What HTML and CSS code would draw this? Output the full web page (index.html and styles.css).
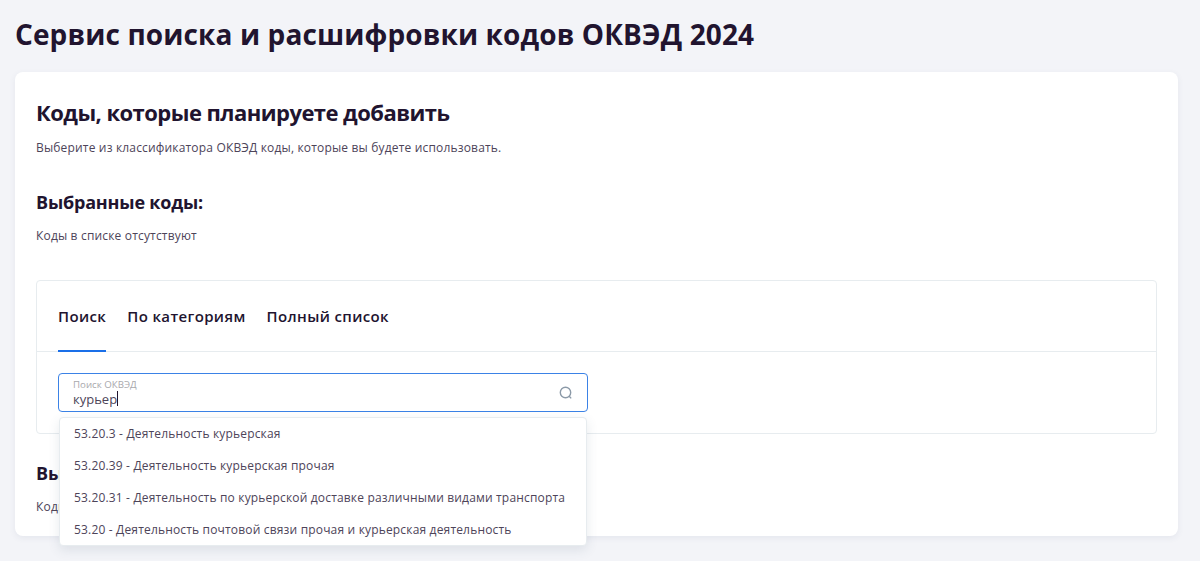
FILE: index.html
```html
<!DOCTYPE html>
<html lang="ru">
  <head>
    <meta charset="UTF-8" />
    <meta name="viewport" content="width=device-width, initial-scale=1.0" />
    <title>Сервис поиска и расшифровки кодов ОКВЭД 2024</title>
    <link rel="stylesheet" href="styles.css">
  </head>
  <body>
    <h1 class="page-title">Сервис поиска и расшифровки кодов ОКВЭД 2024</h1>

    <div class="card">
      <h2 class="card-title">Коды, которые планируете добавить</h2>
      <p class="hint hint-first">Выберите из классификатора ОКВЭД коды, которые вы будете использовать.</p>

      <h3 class="section-title section-selected">Выбранные коды:</h3>
      <p class="hint">Коды в списке отсутствуют</p>

      <div class="picker">
        <div class="tabs">
          <div class="tab active">Поиск</div>
          <div class="tab">По категориям</div>
          <div class="tab">Полный список</div>
        </div>

        <div class="picker-body">
          <div class="search-field">
            <div class="search-text">
              <span class="search-label">Поиск ОКВЭД</span>
              <span class="search-value">курьер<span class="caret"></span></span>
            </div>
            <svg class="search-icon" width="16" height="16" viewBox="0 0 16 16" fill="none">
              <circle cx="7.5" cy="7.5" r="5.2" stroke="#8c9aa8" stroke-width="1.4" />
              <path d="M11.2 11.2L13.2 13.4" stroke="#8c9aa8" stroke-width="1.4" />
            </svg>
          </div>

          <ul class="suggestions">
            <li>53.20.3 - Деятельность курьерская</li>
            <li>53.20.39 - Деятельность курьерская прочая</li>
            <li>53.20.31 - Деятельность по курьерской доставке различными видами транспорта</li>
            <li>53.20 - Деятельность почтовой связи прочая и курьерская деятельность</li>
          </ul>
        </div>
      </div>

      <h3 class="section-title section-excluded">Выбранные коды:</h3>
      <p class="hint">Коды в списке отсутствуют</p>
    </div>
  </body>
</html>
```

FILE: styles.css
```css
html,
body {
  height: 100%;
  overflow: hidden;
}

body {
  margin: 0;
  padding: 15px 22px 0 15px;
  box-sizing: border-box;
  background: #f3f4f8;
  font-family: 'Open Sans', 'Noto Sans', sans-serif;
  color: #21142f;
}

.page-title {
  margin: 0 0 18px 0;
  font-size: 28px;
  line-height: 39px;
  font-weight: 700;
  letter-spacing: 0.12px;
}

.card {
  height: 464px;
  box-sizing: border-box;
  padding: 24px 21px 0 21px;
  background: #fff;
  border-radius: 8px;
  box-shadow: 0 2px 6px rgba(60, 80, 110, 0.08);
}

.card-title {
  margin: 0;
  font-size: 22px;
  line-height: 32px;
  font-weight: 700;
  letter-spacing: -0.54px;
}

.hint {
  margin: 0;
  font-size: 12px;
  line-height: 18px;
  letter-spacing: 0.17px;
  color: #4d4459;
}

.hint-first {
  margin-top: 11px;
}

.section-title {
  margin: 0 0 12px 0;
  font-size: 18px;
  line-height: 26px;
  font-weight: 700;
  letter-spacing: -0.2px;
}

.section-selected {
  margin-top: 32px;
}

.section-excluded {
  margin-top: 26px;
  margin-bottom: 12px;
}

.picker {
  margin-top: 35px;
  height: 154px;
  box-sizing: border-box;
  border: 1px solid #e7ecef;
  border-radius: 4px;
}

.tabs {
  display: flex;
  gap: 21px;
  height: 71px;
  box-sizing: border-box;
  padding-left: 21px;
  border-bottom: 1px solid #e7ecef;
}

.tab {
  height: 71px;
  box-sizing: border-box;
  padding-top: 24px;
  font-size: 15px;
  line-height: 22px;
  font-weight: 600;
  letter-spacing: 0.37px;
}

.tab.active {
  border-bottom: 2px solid #1a6fe8;
}

.picker-body {
  position: relative;
  padding: 21px 21px 0 21px;
}

.search-field {
  display: flex;
  align-items: center;
  justify-content: space-between;
  width: 530px;
  height: 39px;
  box-sizing: border-box;
  padding: 0 13px 0 14px;
  border: 1px solid #3b82e6;
  border-radius: 4px;
}

.search-text {
  display: flex;
  flex-direction: column;
}

.search-label {
  font-size: 9.7px;
  line-height: 12px;
  color: #a8a8ac;
}

.search-value {
  display: flex;
  align-items: center;
  font-size: 13px;
  line-height: 16px;
  color: #4d4459;
}

.caret {
  width: 1px;
  height: 15px;
  background: #21142f;
}

.suggestions {
  position: absolute;
  top: 65px;
  left: 22px;
  width: 528px;
  height: 129px;
  box-sizing: border-box;
  margin: 0;
  padding: 0;
  list-style: none;
  background: #fff;
  border: 1px solid #e7ecef;
  border-radius: 4px;
  box-shadow: 0 4px 12px rgba(60, 80, 110, 0.12);
}

.suggestions li {
  height: 32px;
  padding-left: 14px;
  font-size: 12px;
  line-height: 32px;
  letter-spacing: 0.17px;
  color: #4d4459;
  white-space: nowrap;
}
```
